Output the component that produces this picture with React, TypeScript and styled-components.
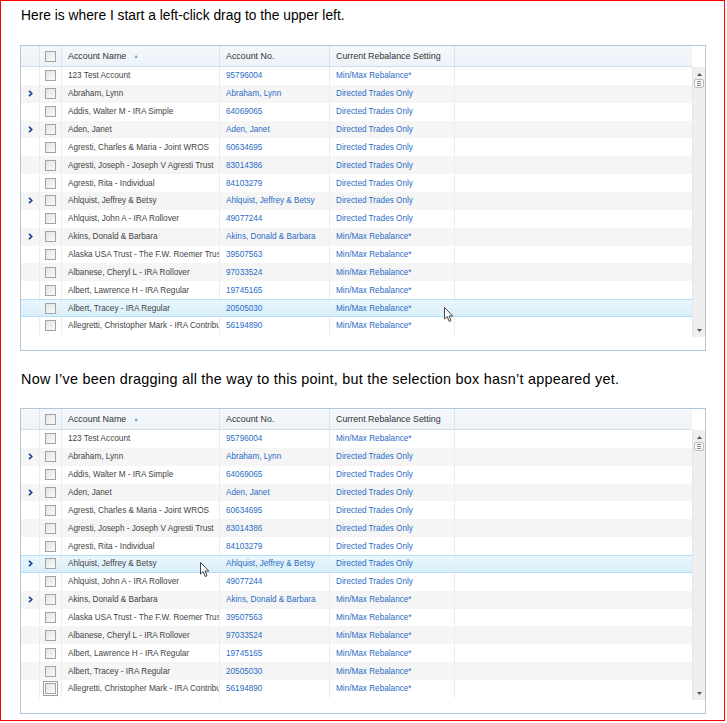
import React from 'react';
import styled, { createGlobalStyle, css } from 'styled-components';

const GlobalStyle = createGlobalStyle`
  html, body {
    margin: 0;
    padding: 0;
    background: #ffffff;
  }
`;

const Frame = styled.div`
  width: 723px;
  height: 719px;
  border: 1px solid #ff0000;
  background: #ffffff;
`;

const Caption = styled.div<{ $top: number; $size: number; $spacing?: number }>`
  margin-top: ${(p) => p.$top}px;
  margin-bottom: 14px;
  padding-left: 20px;
  height: 30px;
  line-height: 30px;
  font-family: "Liberation Sans", Arial, sans-serif;
  font-size: ${(p) => p.$size}px;
  letter-spacing: ${(p) => p.$spacing ?? 0}px;
  color: #000;
  white-space: nowrap;
`;

const Grid = styled.div`
  position: relative;
  margin-left: 19px;
  width: 684px;
  height: 304px;
  border: 1px solid #b3c6d8;
  display: flex;
  font-family: "Liberation Sans", Tahoma, Arial, sans-serif;
  overflow: hidden;
`;

const Table = styled.div`
  flex: 1;
  display: flex;
  flex-direction: column;
`;

const HeaderRow = styled.div`
  display: flex;
  height: 21px;
  box-sizing: border-box;
  background: linear-gradient(#f4f8fc, #edf3f9);
  border-bottom: 1px solid #d3dde7;
`;

const HeadCell = styled.div<{ $w?: number }>`
  ${(p) => (p.$w ? css`width: ${p.$w}px;` : css`flex: 1;`)}
  box-sizing: border-box;
  border-right: 1px solid #dbe3eb;
  display: flex;
  align-items: center;
  padding-left: 6px;
  font-size: 8.9px;
  color: #333;
  white-space: nowrap;
  &:last-child {
    border-right: none;
  }
`;

const CenterHead = styled(HeadCell)`
  padding-left: 0;
  justify-content: center;
`;

const SortArrow = styled.span`
  margin-left: 7px;
  font-size: 5.5px;
  color: #7d9dbd;
`;

const Row = styled.div<{ $alt: boolean; $hover: boolean }>`
  display: flex;
  height: 17.86px;
  box-sizing: border-box;
  background: ${(p) => (p.$alt ? '#f5f5f5' : '#ffffff')};
  ${(p) =>
    p.$hover &&
    css`
      background: linear-gradient(#eaf6fd, #d9effb);
      border-top: 1px solid #b5dff7;
      border-bottom: 1px solid #b5dff7;
    `}
`;

const Cell = styled.div<{ $w?: number; $link?: boolean }>`
  ${(p) => (p.$w ? css`width: ${p.$w}px;` : css`flex: 1;`)}
  box-sizing: border-box;
  border-right: 1px solid #ececec;
  display: flex;
  align-items: center;
  padding-left: 6px;
  font-size: 8.2px;
  color: ${(p) => (p.$link ? '#2b6cc4' : '#444')};
  white-space: nowrap;
  overflow: hidden;
  &:last-child {
    border-right: none;
  }
`;

const IconCell = styled(Cell)`
  padding-left: 0;
  justify-content: center;
`;

const Check = styled.span<{ $focus?: boolean }>`
  display: block;
  width: 9px;
  height: 9px;
  border: 1px solid #a3a3a3;
  background: linear-gradient(135deg, #e4e4e4, #fafafa);
  ${(p) =>
    p.$focus &&
    css`
      outline: 1px solid #9c9c9c;
      outline-offset: 1px;
    `}
`;

const ScrollColumn = styled.div`
  width: 13px;
  padding-top: 21px;
  display: flex;
  flex-direction: column;
`;

const Track = styled.div`
  height: 270px;
  background: #efefef;
  border-left: 1px solid #e6e6e6;
  display: flex;
  flex-direction: column;
  align-items: center;
  padding: 6px 0 5px;
  box-sizing: border-box;
`;

const Thumb = styled.div`
  margin-top: 3px;
  width: 10px;
  height: 9px;
  box-sizing: border-box;
  border: 1px solid #bdbdbd;
  border-radius: 2px;
  background: #f7f7f7;
  display: flex;
  flex-direction: column;
  justify-content: center;
  gap: 1px;
  padding: 0 2px;
`;

const Grip = styled.span`
  height: 1px;
  background: #8a8a8a;
`;

const Spacer = styled.div`
  flex: 1;
`;

const Cursor = styled.svg<{ $x: number; $y: number }>`
  position: absolute;
  left: ${(p) => p.$x}px;
  top: ${(p) => p.$y}px;
`;

type Account = { name: string; no: string; setting: string; group?: boolean };

const accounts: Account[] = [
  { name: '123 Test Account', no: '95796004', setting: 'Min/Max Rebalance*' },
  { name: 'Abraham, Lynn', no: 'Abraham, Lynn', setting: 'Directed Trades Only', group: true },
  { name: 'Addis, Walter M - IRA Simple', no: '64069065', setting: 'Directed Trades Only' },
  { name: 'Aden, Janet', no: 'Aden, Janet', setting: 'Directed Trades Only', group: true },
  { name: 'Agresti, Charles & Maria - Joint WROS', no: '60634695', setting: 'Directed Trades Only' },
  { name: 'Agresti, Joseph - Joseph V Agresti Trust', no: '83014386', setting: 'Directed Trades Only' },
  { name: 'Agresti, Rita - Individual', no: '84103279', setting: 'Directed Trades Only' },
  { name: 'Ahlquist, Jeffrey & Betsy', no: 'Ahlquist, Jeffrey & Betsy', setting: 'Directed Trades Only', group: true },
  { name: 'Ahlquist, John A - IRA Rollover', no: '49077244', setting: 'Directed Trades Only' },
  { name: 'Akins, Donald & Barbara', no: 'Akins, Donald & Barbara', setting: 'Min/Max Rebalance*', group: true },
  { name: 'Alaska USA Trust - The F.W. Roemer Trust', no: '39507563', setting: 'Min/Max Rebalance*' },
  { name: 'Albanese, Cheryl L - IRA Rollover', no: '97033524', setting: 'Min/Max Rebalance*' },
  { name: 'Albert, Lawrence H - IRA Regular', no: '19745165', setting: 'Min/Max Rebalance*' },
  { name: 'Albert, Tracey - IRA Regular', no: '20505030', setting: 'Min/Max Rebalance*' },
  { name: 'Allegretti, Christopher Mark - IRA Contribution', no: '56194890', setting: 'Min/Max Rebalance*' },
];

const Chevron = () => (
  <svg width="5" height="7" viewBox="0 0 5 7">
    <polyline points="1,0.8 3.8,3.5 1,6.2" fill="none" stroke="#1b3f8f" strokeWidth="1.6" />
  </svg>
);

const Arrow = ({ up }: { up?: boolean }) => (
  <svg width="5" height="3" viewBox="0 0 5 3">
    <polygon points={up ? '0,3 5,3 2.5,0' : '0,0 5,0 2.5,3'} fill="#555" />
  </svg>
);

const Pointer = ({ x, y }: { x: number; y: number }) => (
  <Cursor $x={x} $y={y} width="10" height="16" viewBox="0 0 10 16">
    <path
      d="M0.5 0.5 L0.5 12 L3.2 9.6 L5.2 14.5 L7 13.7 L5 9 L8.8 9 Z"
      fill="#fff"
      stroke="#333"
      strokeWidth="0.9"
      strokeLinejoin="round"
    />
  </Cursor>
);

function AccountGrid({ hover, focusLast, cursor }: { hover: number; focusLast?: boolean; cursor: { x: number; y: number } }) {
  return (
    <Grid>
      <Table>
        <HeaderRow>
          <HeadCell $w={19} />
          <CenterHead $w={22}>
            <Check />
          </CenterHead>
          <HeadCell $w={158}>
            Account Name<SortArrow>▲</SortArrow>
          </HeadCell>
          <HeadCell $w={110}>Account No.</HeadCell>
          <HeadCell $w={125}>Current Rebalance Setting</HeadCell>
          <HeadCell />
        </HeaderRow>
        {accounts.map((a, i) => (
          <Row key={a.name} $alt={i % 2 === 1} $hover={i === hover}>
            <IconCell $w={19}>{a.group && <Chevron />}</IconCell>
            <IconCell $w={22}>
              <Check $focus={focusLast && i === accounts.length - 1} />
            </IconCell>
            <Cell $w={158}>{a.name}</Cell>
            <Cell $w={110} $link>
              {a.no}
            </Cell>
            <Cell $w={125} $link>
              {a.setting}
            </Cell>
            <Cell />
          </Row>
        ))}
      </Table>
      <ScrollColumn>
        <Track>
          <Arrow up />
          <Thumb>
            <Grip />
            <Grip />
            <Grip />
          </Thumb>
          <Spacer />
          <Arrow />
        </Track>
      </ScrollColumn>
      <Pointer x={cursor.x} y={cursor.y} />
    </Grid>
  );
}

export default function App() {
  return (
    <>
      <GlobalStyle />
      <Frame>
        <Caption $top={0} $size={13.8}>
          Here is where I start a left-click drag to the upper left.
        </Caption>
        <AccountGrid hover={13} cursor={{ x: 423, y: 261 }} />
        <Caption $top={13} $size={14.4} $spacing={0.25}>
          Now I’ve been dragging all the way to this point, but the selection box hasn’t appeared yet.
        </Caption>
        <AccountGrid hover={7} focusLast cursor={{ x: 179, y: 153 }} />
      </Frame>
    </>
  );
}
